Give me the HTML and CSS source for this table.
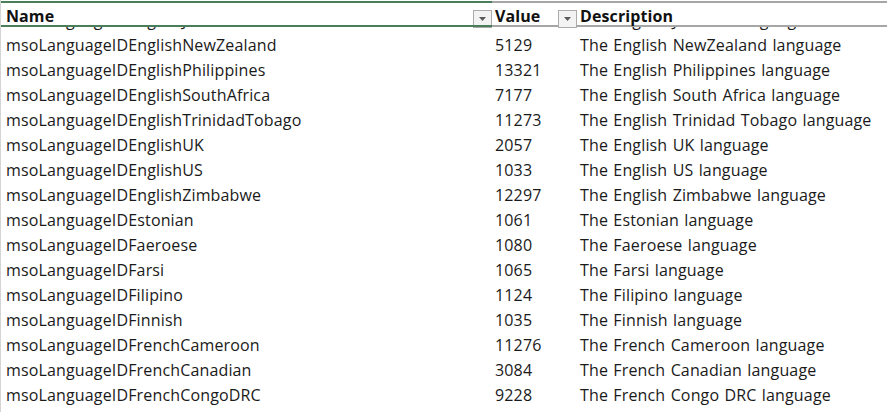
FILE: index.html
```html
<!DOCTYPE html>
<html>
<head>
<meta charset="utf-8">
<link rel="stylesheet" href="styles.css">
</head>
<body>
<div class="sheet">
  <div class="header">
    <div class="cell name"><span class="label">Name</span><span class="dd"><svg width="7" height="4" viewBox="0 0 7 4"><path d="M0 0h7L3.5 4z" fill="#595959"/></svg></span></div>
    <div class="cell value"><span class="label">Value</span><span class="dd"><svg width="7" height="4" viewBox="0 0 7 4"><path d="M0 0h7L3.5 4z" fill="#595959"/></svg></span></div>
    <div class="cell desc"><span class="label">Description</span></div>
  </div>
  <div class="body">
    <div class="rows">
      <div class="row"><div class="cell name">msoLanguageIDEnglishJamaica</div><div class="cell value">8201</div><div class="cell desc">The English Jamaica language</div></div>
      <div class="row"><div class="cell name">msoLanguageIDEnglishNewZealand</div><div class="cell value">5129</div><div class="cell desc">The English NewZealand language</div></div>
      <div class="row"><div class="cell name">msoLanguageIDEnglishPhilippines</div><div class="cell value">13321</div><div class="cell desc">The English Philippines language</div></div>
      <div class="row"><div class="cell name">msoLanguageIDEnglishSouthAfrica</div><div class="cell value">7177</div><div class="cell desc">The English South Africa language</div></div>
      <div class="row"><div class="cell name">msoLanguageIDEnglishTrinidadTobago</div><div class="cell value">11273</div><div class="cell desc">The English Trinidad Tobago language</div></div>
      <div class="row"><div class="cell name">msoLanguageIDEnglishUK</div><div class="cell value">2057</div><div class="cell desc">The English UK language</div></div>
      <div class="row"><div class="cell name">msoLanguageIDEnglishUS</div><div class="cell value">1033</div><div class="cell desc">The English US language</div></div>
      <div class="row"><div class="cell name">msoLanguageIDEnglishZimbabwe</div><div class="cell value">12297</div><div class="cell desc">The English Zimbabwe language</div></div>
      <div class="row"><div class="cell name">msoLanguageIDEstonian</div><div class="cell value">1061</div><div class="cell desc">The Estonian language</div></div>
      <div class="row"><div class="cell name">msoLanguageIDFaeroese</div><div class="cell value">1080</div><div class="cell desc">The Faeroese language</div></div>
      <div class="row"><div class="cell name">msoLanguageIDFarsi</div><div class="cell value">1065</div><div class="cell desc">The Farsi language</div></div>
      <div class="row"><div class="cell name">msoLanguageIDFilipino</div><div class="cell value">1124</div><div class="cell desc">The Filipino language</div></div>
      <div class="row"><div class="cell name">msoLanguageIDFinnish</div><div class="cell value">1035</div><div class="cell desc">The Finnish language</div></div>
      <div class="row"><div class="cell name">msoLanguageIDFrenchCameroon</div><div class="cell value">11276</div><div class="cell desc">The French Cameroon language</div></div>
      <div class="row"><div class="cell name">msoLanguageIDFrenchCanadian</div><div class="cell value">3084</div><div class="cell desc">The French Canadian language</div></div>
      <div class="row"><div class="cell name">msoLanguageIDFrenchCongoDRC</div><div class="cell value">9228</div><div class="cell desc">The French Congo DRC language</div></div>
      <div class="row"><div class="cell name">msoLanguageIDFrenchCotedIvoire</div><div class="cell value">12300</div><div class="cell desc">The French Cote d'Ivoire language</div></div>
    </div>
  </div>
</div>
</body>
</html>
```

FILE: styles.css
```css
html, body {
  margin: 0;
  padding: 0;
  background: #ffffff;
}
body {
  font-family: "Open Sans", "Noto Sans", sans-serif;
  font-size: 16px;
  letter-spacing: 0.15px;
  word-spacing: 1px;
  color: #1a1a1a;
}
.sheet {
  width: 887px;
  height: 412px;
  overflow: hidden;
  padding-top: 1px;
  box-sizing: border-box;
  border-left: 1px solid #d4d4d4;
}
.header {
  display: grid;
  grid-template-columns: 491px 85px 1fr;
  height: 22px;
  border-top: 2px solid #a6a6a6;
  border-bottom: 2px solid #a6a6a6;
  position: relative;
}
.header::before,
.header::after {
  content: "";
  position: absolute;
  left: 0;
  width: 491px;
  height: 2px;
  background: #4a7d5a;
}
.header::before { top: -2px; }
.header::after { bottom: -2px; }
.header .cell {
  display: flex;
  align-items: center;
  justify-content: space-between;
  font-weight: 700;
  letter-spacing: 0.1px;
  color: #111;
}
.header .label { padding-top: 2px; }
.header .name .label { padding-left: 5px; }
.header .value .label,
.header .desc .label { padding-left: 3px; }
.dd {
  align-self: flex-end;
  width: 19px;
  height: 18px;
  box-sizing: border-box;
  border: 1px solid #ababab;
  background: #f3f3f3;
  display: flex;
  align-items: center;
  justify-content: center;
  margin-bottom: -1px;
}
.body {
  height: 385px;
  overflow: hidden;
}
.rows {
  margin-top: -20px;
}
.row {
  display: grid;
  grid-template-columns: 491px 85px 1fr;
  height: 25px;
  align-items: center;
  white-space: nowrap;
}
.row .name { padding-left: 5px; }
.row .value,
.row .desc { padding-left: 3px; }
```
